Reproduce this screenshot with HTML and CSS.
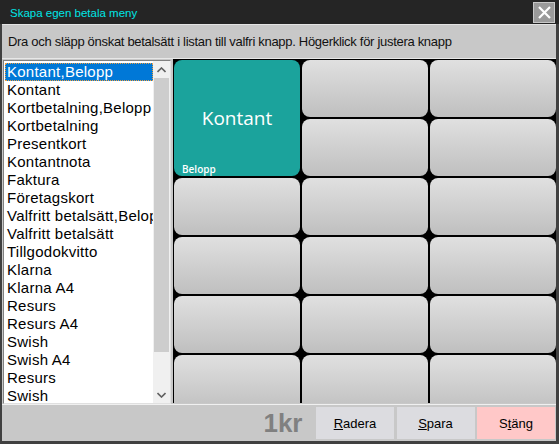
FILE: index.html
```
<!DOCTYPE html>
<html>
	<head>
		<title>Skapa egen betala meny</title>
		<link rel="stylesheet" href="styles.css">
	</head>
	<body>
		<div class="fonster">
			<div class="titel">
				<span class="titeltext">Skapa egen betala meny</span>
				<div class="stang-x">
					<svg width="13" height="13" viewBox="0 0 13 13"><path d="M1 1 L12 12 M12 1 L1 12" stroke="#fff" stroke-width="2.2"/></svg>
				</div>
			</div>
			<div class="innehall">
				<div class="tips">Dra och släpp önskat betalsätt i listan till valfri knapp. Högerklick för justera knapp</div>
				<div class="mitten">
					<div class="lista">
						<div class="rader">
							<div class="rad vald">Kontant,Belopp</div>
							<div class="rad">Kontant</div>
							<div class="rad">Kortbetalning,Belopp</div>
							<div class="rad">Kortbetalning</div>
							<div class="rad">Presentkort</div>
							<div class="rad">Kontantnota</div>
							<div class="rad">Faktura</div>
							<div class="rad">Företagskort</div>
							<div class="rad">Valfritt betalsätt,Belopp</div>
							<div class="rad">Valfritt betalsätt</div>
							<div class="rad">Tillgodokvitto</div>
							<div class="rad">Klarna</div>
							<div class="rad">Klarna A4</div>
							<div class="rad">Resurs</div>
							<div class="rad">Resurs A4</div>
							<div class="rad">Swish</div>
							<div class="rad">Swish A4</div>
							<div class="rad">Resurs</div>
							<div class="rad">Swish</div>
						</div>
						<div class="rullist">
							<div class="pil">
								<svg width="9" height="6" viewBox="0 0 9 6"><path d="M0.5 5 L4.5 1 L8.5 5" stroke="#606060" stroke-width="1.6" fill="none"/></svg>
							</div>
							<div class="spar"><div class="tumme"></div></div>
							<div class="pil">
								<svg width="9" height="6" viewBox="0 0 9 6"><path d="M0.5 1 L4.5 5 L8.5 1" stroke="#606060" stroke-width="1.6" fill="none"/></svg>
							</div>
						</div>
					</div>
					<div class="knappar">
						<div class="knapp betal">
							<span class="namn">Kontant</span>
							<span class="belopp">Belopp</span>
						</div>
						<div class="knapp"></div><div class="knapp"></div>
						<div class="knapp"></div><div class="knapp"></div>
						<div class="knapp"></div><div class="knapp"></div><div class="knapp"></div>
						<div class="knapp"></div><div class="knapp"></div><div class="knapp"></div>
						<div class="knapp"></div><div class="knapp"></div><div class="knapp"></div>
						<div class="knapp"></div><div class="knapp"></div><div class="knapp"></div>
					</div>
				</div>
				<div class="botten">
					<span class="summa">1kr</span>
					<button class="kn"><u>R</u>adera</button>
					<button class="kn"><u>S</u>para</button>
					<button class="kn rod">S<u>t</u>äng</button>
				</div>
			</div>
		</div>
	</body>
</html>
```
FILE: styles.css
```
*{
	box-sizing: border-box;
}
body{
	margin: 0;
	font-family: "Liberation Sans", Arial, sans-serif;
}
.fonster{
	width: 559px;
	height: 444px;
	background: #252525;
	display: flex;
	flex-direction: column;
}
.titel{
	height: 24px;
	display: flex;
	align-items: center;
	justify-content: space-between;
	padding: 0 4px 0 10px;
}
.titeltext{
	color: #00e5e5;
	font-family: "Liberation Sans", Arial, sans-serif;
	font-size: 11.5px;
	margin-top: 2px;
}
.stang-x{
	width: 22px;
	height: 21px;
	background: #9a9a9a;
	border: 1px solid #c8c8c8;
	display: flex;
	align-items: center;
	justify-content: center;
	margin-top: 1px;
}
.innehall{
	flex: 1;
	background: #c8c8c8;
	border-left: 2px solid #404040;
	border-right: 3px solid #404040;
	border-bottom: 3px solid #404040;
	display: flex;
	flex-direction: column;
}
.tips{
	height: 35px;
	border-top: 1px solid #e4e4e4;
	border-bottom: 1px solid #e8e8e8;
	font-size: 13px;
	letter-spacing: -0.3px;
	color: #111;
	padding: 9px 0 0 6px;
}
.mitten{
	display: flex;
	height: 345px;
	padding: 0 0 0 1px;
}
.lista{
	width: 168px;
	background: #fff;
	border: 1px solid #808080;
	border-right-color: #e0e0e0;
	border-bottom-color: #e0e0e0;
	display: flex;
	margin-top: 1px;
	overflow: hidden;
}
.rader{
	flex: 1;
	overflow: hidden;
	padding-top: 2px;
}
.rad{
	height: 18px;
	line-height: 18px;
	font-size: 15px;
	letter-spacing: 0.25px;
	padding-left: 3px;
	color: #000;
	white-space: nowrap;
}
.vald{
	background: #0078d7;
	color: #fff;
	outline: 1px dotted #f0a040;
	outline-offset: -1px;
	margin-left: 1px;
	padding-left: 2px;
}
.rullist{
	width: 17px;
	background: #f0f0f0;
	display: flex;
	flex-direction: column;
}
.pil{
	height: 17px;
	display: flex;
	align-items: center;
	justify-content: center;
}
.spar{
	flex: 1;
	padding: 0 1px;
}
.tumme{
	height: 274px;
	background: #cdcdcd;
}
.knappar{
	flex: 1;
	background: #000;
	margin-left: 2px;
	padding: 1px 1px 0 1px;
	display: grid;
	grid-template-columns: repeat(3, 126px);
	grid-auto-rows: 57px;
	gap: 2px;
	overflow: hidden;
	height: 344px;
}
.knapp{
	border-radius: 8px;
	background: linear-gradient(#e0e0e0, #bfbfbf);
}
.betal{
	grid-row: span 2;
	background: #1ba39c;
	position: relative;
	display: flex;
	align-items: center;
	justify-content: center;
}
.namn{
	color: #fff;
	font-family: "Open Sans", sans-serif;
	font-size: 19px;
	margin-top: -1px;
}
.belopp{
	position: absolute;
	left: 8px;
	bottom: 0;
	color: #fff;
	font-family: "Open Sans", sans-serif;
	font-size: 10px;
	font-weight: 600;
}
.botten{
	flex: 1;
	border-top: 1px solid #f0f0f0;
	display: flex;
	align-items: center;
	justify-content: flex-end;
	gap: 2.5px;
	padding-right: 1px;
}
.summa{
	color: #808080;
	font-size: 26px;
	font-weight: 700;
	margin-right: 11px;
}
.kn{
	width: 78px;
	height: 32px;
	border: none;
	background: #dcdce0;
	font-family: "Liberation Sans", Arial, sans-serif;
	font-size: 13px;
	color: #000;
}
.rod{
	background: #ffc8c8;
}
```
